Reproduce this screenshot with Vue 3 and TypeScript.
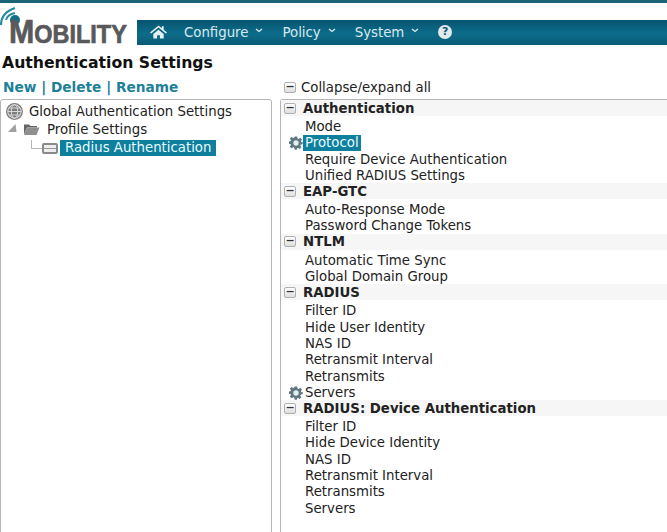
<script setup lang="ts">
interface Item { label: string; gear?: boolean; selected?: boolean }
interface Section { title: string; items: Item[] }
const sections: Section[] = [
  { title: 'Authentication', items: [
    { label: 'Mode' },
    { label: 'Protocol', gear: true, selected: true },
    { label: 'Require Device Authentication' },
    { label: 'Unified RADIUS Settings' },
  ] },
  { title: 'EAP-GTC', items: [{ label: 'Auto-Response Mode' }, { label: 'Password Change Tokens' }] },
  { title: 'NTLM', items: [{ label: 'Automatic Time Sync' }, { label: 'Global Domain Group' }] },
  { title: 'RADIUS', items: [
    { label: 'Filter ID' },
    { label: 'Hide User Identity' },
    { label: 'NAS ID' },
    { label: 'Retransmit Interval' },
    { label: 'Retransmits' },
    { label: 'Servers', gear: true },
  ] },
  { title: 'RADIUS: Device Authentication', items: [
    { label: 'Filter ID' },
    { label: 'Hide Device Identity' },
    { label: 'NAS ID' },
    { label: 'Retransmit Interval' },
    { label: 'Retransmits' },
    { label: 'Servers' },
  ] },
]
</script>

<template>
  <div class="page">
    <div class="topline"></div>
    <header class="head">
      <div class="logo">
        <svg class="waves" width="24" height="30" viewBox="0 0 24 30">
          <path d="M1 20C1 11 6 6 15 3" fill="none" stroke="#2a8aa0" stroke-width="2.200" />
          <path d="M6 15C7 11 10 9 15 8" fill="none" stroke="#2a8aa0" stroke-width="2" />
          <circle cx="15" cy="15" r="5" fill="#0f6f88" />
        </svg>
        <span class="brand"><span class="big">M</span>OBILITY</span>
      </div>
      <nav class="nav">
        <svg class="home" width="17" height="14" viewBox="0 0 18 14">
          <path d="M9 0 0 7.500l1.200 1L9 2.200l7.800 6.300 1.200-1L14.500 4.600V1h-2v2L9 0z" fill="#e8f0f3" />
          <path d="M3.500 9 9 4.500 14.500 9v5H10.500v-3.500h-3V14H3.500z" fill="#e8f0f3" />
        </svg>
        <span class="nav-item">Configure<svg class="caret" width="8" height="5" viewBox="0 0 8 5"><path d="M1 1l3 2.500L7 1" fill="none" stroke="#dfeaee" stroke-width="1.300" /></svg></span>
        <span class="nav-item">Policy<svg class="caret" width="8" height="5" viewBox="0 0 8 5"><path d="M1 1l3 2.500L7 1" fill="none" stroke="#dfeaee" stroke-width="1.300" /></svg></span>
        <span class="nav-item">System<svg class="caret" width="8" height="5" viewBox="0 0 8 5"><path d="M1 1l3 2.500L7 1" fill="none" stroke="#dfeaee" stroke-width="1.300" /></svg></span>
        <span class="help">?</span>
      </nav>
    </header>

    <h1 class="title">Authentication Settings</h1>

    <div class="columns">
      <div class="left">
        <div class="actions"><span>New</span> | <span>Delete</span> | <span>Rename</span></div>
        <div class="tree">
          <div class="tree-row root">
            <svg class="globe" width="17" height="17" viewBox="0 0 16 16">
              <circle cx="8" cy="8" r="8" fill="#7d7d7d" />
              <g fill="none" stroke="#d8d8d8" stroke-width="1">
                <circle cx="8" cy="8" r="6.300" />
                <ellipse cx="8" cy="8" rx="3" ry="6.300" />
                <path d="M1.700 8h12.600M2.700 4.700h10.600M2.700 11.300h10.600" />
              </g>
            </svg>
            <span>Global Authentication Settings</span>
          </div>
          <div class="tree-row profile">
            <svg class="arrow" width="11" height="10" viewBox="0 0 11 10"><path d="M8.500 1 9.500 9H1z" fill="#a0a0a0" /></svg>
            <svg class="folder" width="17" height="14" viewBox="0 0 17 13">
              <path d="M1 12V2h5l1.500 1.500H14V5H4L1 12z" fill="#666" />
              <path d="M1 12.500 4 5h12.500l-3 7.500z" fill="#8f8f8f" />
            </svg>
            <span>Profile Settings</span>
          </div>
          <div class="tree-row leaf">
            <span class="connector"></span>
            <span class="card-icon"></span>
            <span class="leaf-label">Radius Authentication</span>
          </div>
        </div>
      </div>

      <div class="right">
        <div class="collapse"><span class="toggle">−</span><span>Collapse/expand all</span></div>
        <div class="panel">
          <section v-for="s in sections" :key="s.title" class="sec">
            <div class="sec-head"><span class="toggle">−</span><span class="sec-title">{{ s.title }}</span></div>
            <div class="sec-body">
              <div v-for="it in s.items" :key="it.label" class="row">
                <svg v-if="it.gear" class="gear" width="14" height="14" viewBox="0 0 24 24">
                  <path d="M10 1h4l.7 3.200 1.900.8 2.800-1.800 2.800 2.800-1.800 2.800.8 1.900L23.400 10v4l-3.200.7-.8 1.900 1.800 2.800-2.800 2.800-2.800-1.800-1.900.8L13.700 23.400h-4L9 20.200l-1.900-.8-2.800 1.800-2.800-2.800 1.800-2.800-.8-1.900L-.7 13.700v-4L2.500 9l.8-1.900L1.500 4.300l2.800-2.800 2.800 1.800L9 2.500z" fill="#5f7780" />
                  <circle cx="12" cy="12" r="4.600" fill="#e6edf0" />
                </svg>
                <span :class="{ sel: it.selected }">{{ it.label }}</span>
              </div>
            </div>
          </section>
        </div>
      </div>
    </div>
  </div>
</template>

<style>
html, body { margin: 0; background: #fff; }
</style>

<style scoped>
.page {
  width: 667px;
  height: 532px;
  overflow: hidden;
  font-family: "DejaVu Sans", Verdana, sans-serif;
  font-size: 13.300px;
  color: #222;
  background: #fff;
}
.topline { height: 3px; background: #1c6478; }
.head { display: flex; align-items: flex-start; height: 42px; }
.logo { position: relative; width: 137px; height: 42px; flex: none; }
.waves { position: absolute; left: 0; top: 2px; }
.brand {
  position: absolute;
  left: 9px;
  top: 14px;
  font-family: "Liberation Sans", Arial, sans-serif;
  font-weight: 700;
  font-size: 25.500px;
  line-height: 30px;
  color: #59595b;
  transform-origin: left center;
  transform: scaleX(0.92);
  white-space: nowrap;
  -webkit-text-stroke: 0.7px #59595b;
}
.big { font-size: 33px; }
.nav {
  flex: 1;
  height: 25px;
  margin-top: 17px;
  display: flex;
  align-items: center;
  background: linear-gradient(#07546f, #0c6d8b 55%, #0a5a75);
  color: #d9e8ee;
  padding-left: 13px;
}
.home { flex: none; margin-right: 17px; margin-top: -2px; }
.nav-item { display: flex; align-items: center; margin-right: 19px; }
.caret { margin-left: 7px; margin-top: -4px; }
.help {
  width: 14px;
  height: 14px;
  border-radius: 50%;
  background: #e2e9ec;
  color: #0a5a75;
  font-size: 11px;
  font-weight: 700;
  line-height: 14px;
  text-align: center;
  margin-top: -2px;
}
.title {
  margin: 0;
  padding: 8px 0 0 2px;
  font-size: 15.700px;
  line-height: 20px;
  font-weight: 700;
  color: #111;
}
.columns { display: flex; align-items: flex-start; margin-top: 6px; }
.left { width: 280px; flex: none; }
.actions {
  padding-left: 3px;
  font-weight: 700;
  font-size: 13.700px;
  line-height: 16px;
  color: #1d8199;
  white-space: pre-wrap;
}
.tree {
  margin-top: 4px;
  width: 272px;
  height: 440px;
  box-sizing: border-box;
  border: 1px solid #b5b5b5;
  border-radius: 3px 3px 0 0;
  padding-top: 2px;
}
.tree-row { display: flex; align-items: center; height: 18px; white-space: nowrap; }
.root { padding-left: 5px; }
.globe { margin-right: 6px; }
.profile { padding-left: 6px; }
.arrow { margin-right: 5px; margin-top: -3px; }
.folder { margin-right: 7px; }
.leaf { padding-left: 30px; padding-top: 1px; }
.connector {
  width: 11px;
  height: 9px;
  margin-top: -7px;
  border-left: 1px solid #b5b5b5;
  border-bottom: 1px solid #b5b5b5;
  box-sizing: border-box;
  flex: none;
}
.card-icon {
  width: 16px;
  height: 11px;
  border: 2px solid #8a8a8a;
  border-radius: 2px;
  box-sizing: border-box;
  background: linear-gradient(#eee 45%, #999 45%, #999 60%, #eee 60%);
  flex: none;
  margin-right: 2px;
}
.leaf-label { background: #0f7f9e; color: #e6fbff; padding: 0 5px; line-height: 16px; }
.right { flex: 1; min-width: 0; }
.collapse { display: flex; align-items: center; height: 16px; padding-left: 4px; gap: 5px; white-space: nowrap; }
.toggle {
  width: 12px;
  height: 11px;
  box-sizing: border-box;
  border: 1px solid #b0b0b0;
  border-radius: 2px;
  background: linear-gradient(#fff, #ddd);
  color: #333;
  font-size: 11px;
  font-weight: 700;
  line-height: 8px;
  text-align: center;
  flex: none;
}
.panel {
  margin-top: 4px;
  height: 440px;
  box-sizing: border-box;
  border-left: 1px solid #b5b5b5;
  border-top: 1px solid #b5b5b5;
  border-radius: 3px 0 0 0;
}
.sec-head {
  display: flex;
  align-items: center;
  height: 16px;
  padding-left: 3px;
  background: #f6f6f6;
  gap: 7px;
}
.sec-title { font-weight: 700; white-space: nowrap; }
.sec-body { padding-top: 3px; margin-bottom: -1px; }
.row { position: relative; height: 16.300px; line-height: 16.300px; padding-left: 24px; white-space: nowrap; }
.sel { background: #0f7f9e; color: #e6fbff; padding: 0 2px 0 2px; margin-left: -2px; display: inline-block; line-height: 16px; }
.gear { position: absolute; left: 8px; top: 1px; }
</style>
